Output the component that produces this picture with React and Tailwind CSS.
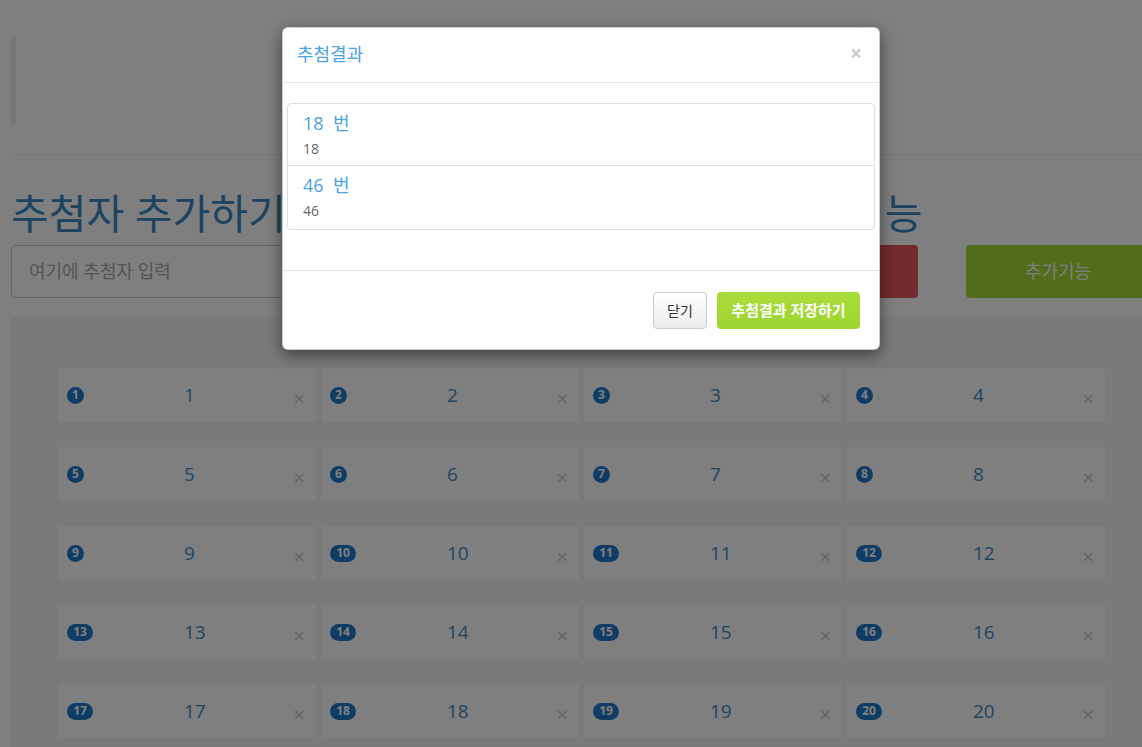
import React from "react";

const FONT = { fontFamily: '"Open Sans", "Noto Sans CJK KR", sans-serif' };

function Card({ n }) {
  const two = n >= 10;
  return (
    <div className="h-[56px] bg-white border border-[#f2f2f2] rounded-[2px] flex items-center pl-[9px] pr-[11px]">
      <div className="w-[117px] flex items-center">
        <span
          className={`h-[17px] ${two ? "w-[26px]" : "w-[17px]"} rounded-full bg-[#1d78c8] text-white text-[12px] font-bold flex items-center justify-center leading-none`}
        >
          {n}
        </span>
      </div>
      <div className="flex-1 text-[19px] text-[#3f8ac2] leading-none">{n}</div>
      <div className="text-[20px] text-[#c6c6c6] leading-none mt-[8px]">×</div>
    </div>
  );
}

export default function App() {
  const nums = Array.from({ length: 20 }, (_, i) => i + 1);
  return (
    <div className="relative w-[1142px] h-[747px] overflow-hidden bg-white" style={FONT}>
      <div className="w-[1161px] px-[11px]">
        <div className="pt-[36px]">
          <div className="h-[89px] border-l-[5px] border-[#eeeeee]" />
        </div>
        <div className="mt-[29px] border-t border-[#eeeeee]" />
        <div className="flex gap-[48px]">
          <div className="w-[675px]">
            <h1 className="mt-[36px] mb-[9px] text-[41px] leading-[1.1] text-[#3b86bf] font-normal whitespace-nowrap">
              추첨자 추가하기
            </h1>
            <div className="h-[53px] border border-[#cccccc] rounded-[4px] flex items-center pl-[17px] text-[18px] text-[#a9a9a9]">
              여기에 추첨자 입력
            </div>
          </div>
          <div className="w-[416px]">
            <h1 className="mt-[36px] mb-[9px] ml-[27px] text-[41px] leading-[1.1] text-[#3b86bf] font-normal whitespace-nowrap">
              추첨 기능
            </h1>
            <div className="flex gap-[48px]">
              <div className="w-[184px] h-[53px] rounded-[4px] bg-[#e4565f] flex items-center justify-center text-[18px] text-white">
                추첨하기
              </div>
              <div className="w-[184px] h-[53px] rounded-[4px] bg-[#a3d936] flex items-center justify-center text-[18px] text-white">
                추가기능
              </div>
            </div>
          </div>
        </div>
        <div className="mt-[19px] bg-[#f4f4f4] rounded-[4px] pt-[50px] pl-[46px] pb-[30px]">
          <div className="grid grid-cols-[repeat(4,260px)] gap-x-[3px] gap-y-[23px]">
            {nums.map((n) => (
              <Card key={n} n={n} />
            ))}
          </div>
        </div>
      </div>

      <div className="absolute inset-0 bg-black/50" />

      <div className="absolute left-[282px] top-[27px] w-[598px] bg-white rounded-[6px] border border-black/20 shadow-[0_5px_15px_rgba(0,0,0,0.5)]">
        <div className="h-[55px] border-b border-[#e5e5e5] flex items-center justify-between pl-[14px] pr-[17px]">
          <div className="text-[18px] text-[#4aa3e0] leading-[1.1]">추첨결과</div>
          <div className="text-[21px] font-bold text-[#cccccc] leading-none -mt-[3px]">×</div>
        </div>
        <div className="pt-[20px] pb-[40px] px-[4px]">
          <div className="border border-[#dddddd] rounded-[4px]">
            <div className="h-[62px] pt-[9px] pl-[15px] border-b border-[#dddddd]">
              <div className="text-[18px] leading-[20px] text-[#4aa3e0]">18&nbsp; 번</div>
              <div className="mt-[6px] text-[14px] leading-[20px] text-[#666666]">18</div>
            </div>
            <div className="h-[63px] pt-[9px] pl-[15px]">
              <div className="text-[18px] leading-[20px] text-[#4aa3e0]">46&nbsp; 번</div>
              <div className="mt-[6px] text-[14px] leading-[20px] text-[#666666]">46</div>
            </div>
          </div>
        </div>
        <div className="border-t border-[#e5e5e5] h-[79px] flex items-center justify-end gap-[10px] pr-[19px]">
          <div className="h-[37px] w-[54px] rounded-[4px] border border-[#cccccc] bg-gradient-to-b from-white to-[#ececec] flex items-center justify-center text-[14px] text-[#333333]">
            닫기
          </div>
          <div className="h-[37px] w-[143px] rounded-[4px] bg-gradient-to-b from-[#a8dc3a] to-[#9dd531] flex items-center justify-center text-[15px] font-bold text-white">
            추첨결과 저장하기
          </div>
        </div>
      </div>
    </div>
  );
}
